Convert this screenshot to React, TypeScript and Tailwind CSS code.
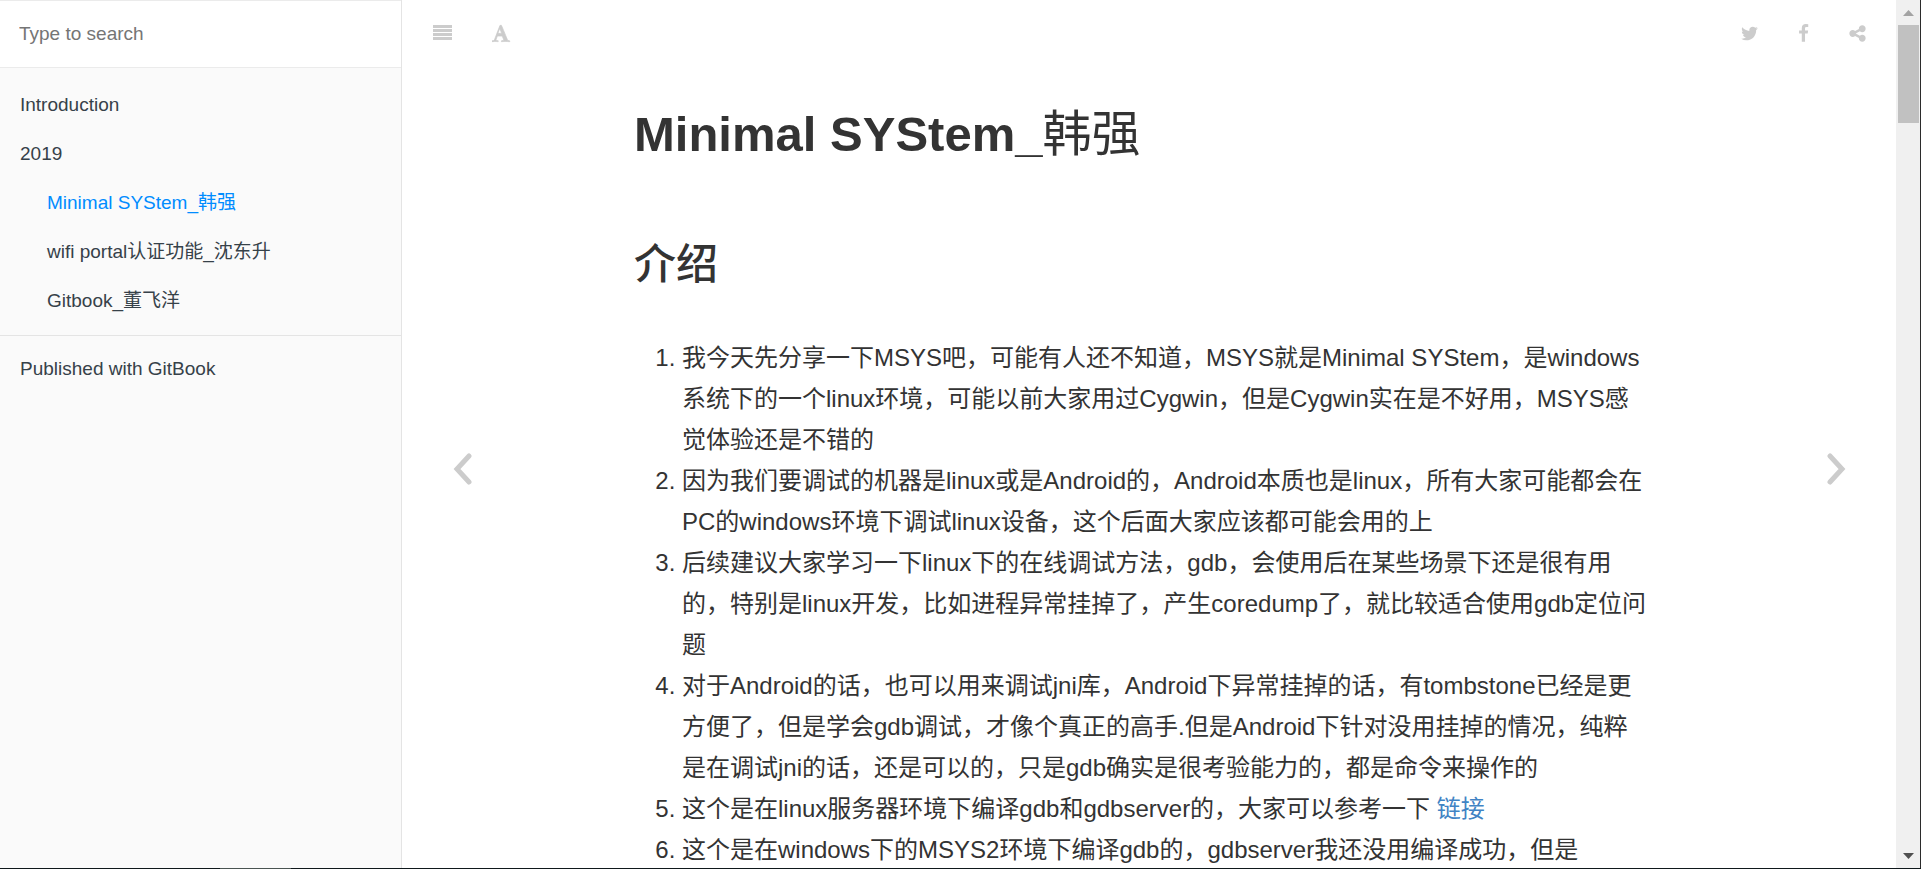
import type { ReactNode } from "react";

function Glyph({ path, bold = false }: { path: string; bold?: boolean }) {
  return (
    <svg
      viewBox="0 0 1792 1792"
      className="h-[19px] w-[19px]"
      fill="currentColor"
      stroke={bold ? "currentColor" : "none"}
      strokeWidth={bold ? 70 : 0}
      aria-hidden="true"
    >
      <path d={path} />
    </svg>
  );
}

const TWITTER =
  "M1684 408q-67 98-162 167 1 14 1 42 0 130-38 259.500t-115.500 248.500-184.500 210.500-258 146-323 54.500q-271 0-496-145 35 4 78 4 225 0 401-138-105-2-188-64.500t-114-159.500q33 5 61 5 43 0 85-11-112-23-185.500-111.500t-73.500-205.500v-4q68 38 146 41-66-44-105-115t-39-154q0-88 44-163 121 149 294.500 238.500t371.500 99.500q-8-38-8-74 0-134 94.500-228.500t228.500-94.500q140 0 236 102 109-21 205-78-37 115-142 178 93-10 186-50z";
const FACEBOOK =
  "M1343 12v264h-157q-86 0-116 36t-30 108v189h293l-39 296h-254v759h-306v-759h-255v-296h255v-218q0-186 104-288.500t277-102.500q147 0 228 12z";
const SHARE =
  "M1344 1024q133 0 226.500 93.500t93.500 226.500-93.500 226.500-226.500 93.500-226.500-93.500-93.500-226.500q0-12 2-34l-360-180q-92 86-218 86-133 0-226.500-93.500t-93.500-226.500 93.500-226.500 226.500-93.500q126 0 218 86l360-180q-2-22-2-34 0-133 93.500-226.500t226.500-93.500 226.500 93.500 93.500 226.500-93.500 226.500-226.500 93.500q-126 0-218-86l-360 180q2 22 2 34t-2 34l360 180q92-86 218-86z";
const FONT =
  "M725 431l-170 450q33 0 136.500 2t160.500 2q19 0 57-2-87-253-184-452zm-725 1233l2-79q23-7 56-12.500t57-10.500 49.500-14.500 44.500-29 31-50.500l237-616 280-724h128q8 14 11 21l205 480q33 78 106 257.500t114 274.500q15 34 58 144.500t72 168.500q20 45 35 57 19 15 88 29.500t84 20.500q6 38 6 57 0 4-.5 13t-.5 13q-63 0-190-8t-191-8q-76 0-215 7t-178 8q0-43 4-78l131-28q1 0 12.500-2.500t15.500-3.500 14.500-4.500 15-6.500 11-8 9-11 2.500-14q0-16-31-96.500t-72-177.500-42-100l-450-2q-26 58-76.500 195.500t-50.500 162.500q0 22 14 37.500t43.500 24.500 48.500 13.500 57 8.500 41 4q1 19 1 58 0 9-2 27-58 0-174.500-10t-174.500-10q-8 0-26.500 4t-21.500 4q-80 14-188 14z";

const chapters = [
  { label: "Introduction" },
  { label: "2019" },
  { label: "Minimal SYStem_韩强", nested: true, active: true },
  { label: "wifi portal认证功能_沈东升", nested: true },
  { label: "Gitbook_董飞洋", nested: true },
];

const points: ReactNode[] = [
  "我今天先分享一下MSYS吧，可能有人还不知道，MSYS就是Minimal SYStem，是windows系统下的一个linux环境，可能以前大家用过Cygwin，但是Cygwin实在是不好用，MSYS感觉体验还是不错的",
  "因为我们要调试的机器是linux或是Android的，Android本质也是linux，所有大家可能都会在PC的windows环境下调试linux设备，这个后面大家应该都可能会用的上",
  "后续建议大家学习一下linux下的在线调试方法，gdb，会使用后在某些场景下还是很有用的，特别是linux开发，比如进程异常挂掉了，产生coredump了，就比较适合使用gdb定位问题",
  "对于Android的话，也可以用来调试jni库，Android下异常挂掉的话，有tombstone已经是更方便了，但是学会gdb调试，才像个真正的高手.但是Android下针对没用挂掉的情况，纯粹是在调试jni的话，还是可以的，只是gdb确实是很考验能力的，都是命令来操作的",
  <>
    这个是在linux服务器环境下编译gdb和gdbserver的，大家可以参考一下{" "}
    <a href="#link" className="text-[#4183c4]">
      链接
    </a>
  </>,
  "这个是在windows下的MSYS2环境下编译gdb的，gdbserver我还没用编译成功，但是",
];

function Sidebar() {
  return (
    <aside className="w-[402px] shrink-0 border-r border-[#e4e4e4] bg-[#fafafa] text-[19px] leading-[49px] text-[#364149]">
      <div className="border-y border-[#ebebeb] bg-white">
        <input
          type="text"
          aria-label="Type to search"
          placeholder="Type to search"
          className="block h-[66px] w-full px-[19px] text-[19px] outline-none placeholder:text-[#757575]"
        />
      </div>
      <nav>
        <ul className="pt-3 pb-[10px]">
          {chapters.map((c) => (
            <li key={c.label} className={c.nested ? "pl-[47px]" : "pl-5"}>
              <a href="#chapter" className={c.active ? "text-[#008cff]" : ""}>
                {c.label}
              </a>
            </li>
          ))}
        </ul>
        <div className="border-t border-[#e4e4e4] pt-2 pl-5">
          <a href="#gitbook">Published with GitBook</a>
        </div>
      </nav>
    </aside>
  );
}

function Toolbar() {
  return (
    <header className="flex h-[66px] shrink-0 items-center justify-between pr-[29px] pl-[31px] text-[#ccc]">
      <div className="flex gap-10">
        <button type="button" aria-label="Toggle sidebar">
          <svg viewBox="0 0 19 19" className="h-[19px] w-[19px]" fill="currentColor" aria-hidden="true">
            <path d="M0 1h19v3H0zM0 5h19v3H0zM0 9h19v3H0zM0 13h19v3H0z" />
          </svg>
        </button>
        <button type="button" aria-label="Font settings">
          <Glyph path={FONT} bold />
        </button>
      </div>
      <div className="flex gap-[35px]">
        <button type="button" aria-label="Twitter">
          <Glyph path={TWITTER} />
        </button>
        <button type="button" aria-label="Facebook">
          <Glyph path={FACEBOOK} />
        </button>
        <button type="button" aria-label="Share">
          <Glyph path={SHARE} />
        </button>
      </div>
    </header>
  );
}

function PageArrow({ label, points }: { label: string; points: string }) {
  return (
    <a href="#page" aria-label={label} className="flex w-[121px] shrink-0 items-center justify-center pt-1 text-[#ccc]">
      <svg
        viewBox="0 0 20 32"
        className="h-8 w-5"
        fill="none"
        stroke="currentColor"
        strokeWidth="5"
        strokeLinejoin="miter"
        strokeLinecap="round"
        aria-hidden="true"
      >
        <polyline points={points} />
      </svg>
    </a>
  );
}

function Scrollbar() {
  return (
    <div className="flex w-[25px] shrink-0 flex-col items-center border-r border-[#2b2b2b] bg-[#f0f0f0]" aria-hidden="true">
      <svg viewBox="0 0 11 6" className="mt-[10px] h-[6px] w-[11px]" fill="#a3a3a3">
        <path d="M5.500 0 11 6H0z" />
      </svg>
      <div className="mt-[9px] h-[98px] w-[21px] bg-[#c1c1c1]" />
      <svg viewBox="0 0 11 6" className="mt-auto mb-[9px] h-[6px] w-[11px]" fill="#505050">
        <path d="M5.500 6 0 0h11z" />
      </svg>
    </div>
  );
}

export default function App() {
  return (
    <div
      lang="zh-CN"
      className="flex h-screen flex-col overflow-hidden bg-white font-['Liberation_Sans','Noto_Sans_CJK_SC',sans-serif] text-[#333]"
    >
      <div className="flex min-h-0 flex-1">
        <Sidebar />
        <div className="flex min-w-0 flex-1 flex-col">
          <Toolbar />
          <div className="flex min-h-0 flex-1 justify-between">
            <PageArrow label="Previous page" points="16,3 4,16 16,29" />
            <main className="max-w-[1030px] min-w-0 flex-1 overflow-hidden pt-[38px]">
              <h1 className="text-[49px] leading-[60px] font-bold">
                Minimal SYStem_<span className="font-normal">韩强</span>
              </h1>
              <h2 className="mt-[76px] text-[42px] leading-[50px] font-medium">介绍</h2>
              <ol className="mt-[47px] list-decimal pr-4 pl-12 text-[24px] leading-[41px]">
                {points.map((p, i) => (
                  <li key={i}>{p}</li>
                ))}
              </ol>
            </main>
            <PageArrow label="Next page" points="4,3 16,16 4,29" />
          </div>
        </div>
        <Scrollbar />
      </div>
      <div className="flex h-px shrink-0 bg-[#0f181b] pl-[220px]">
        <div className="w-[71px] bg-[#4a5452]" />
      </div>
    </div>
  );
}
